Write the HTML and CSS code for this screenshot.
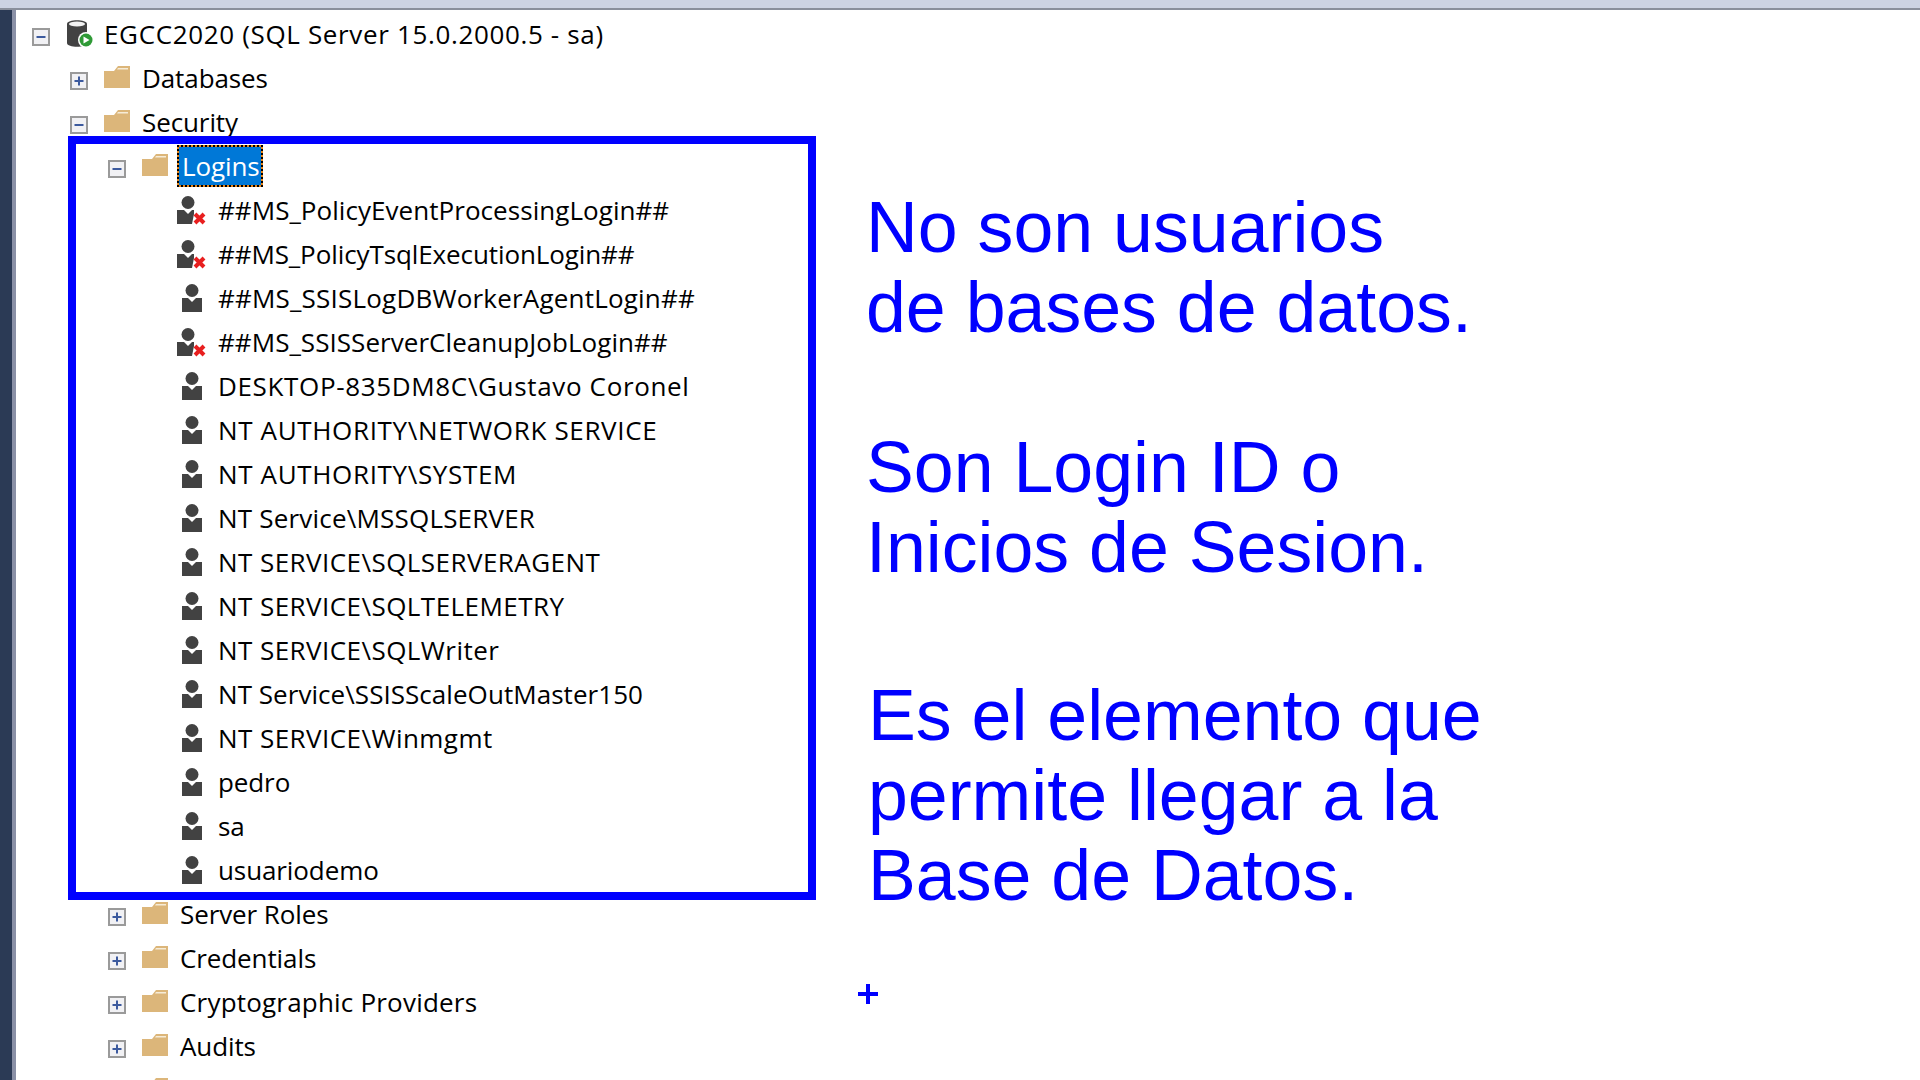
FILE: index.html
```html
<!DOCTYPE html>
<html lang="en">

<head>
    <meta charset="UTF-8">
    <title>EGCC2020 - Logins</title>
    <link rel="stylesheet" href="styles.css">
</head>

<body>
    <svg class="defs" width="0" height="0">
        <symbol id="plus" viewBox="0 0 18 18">
            <rect x="1" y="1" width="16" height="16" fill="#f1f1f4" stroke="#9a9a9a" stroke-width="2"/>
            <path d="M4.5 9h9M9 4.5v9" stroke="#3c5a9e" stroke-width="2"/>
        </symbol>
        <symbol id="minus" viewBox="0 0 18 18">
            <rect x="1" y="1" width="16" height="16" fill="#f1f1f4" stroke="#9a9a9a" stroke-width="2"/>
            <path d="M4.5 9h9" stroke="#3c5a9e" stroke-width="2"/>
        </symbol>
        <symbol id="folder" viewBox="0 0 26 24">
            <path d="M0 6 10 6 14 1H26V23H0Z" fill="#dcb67a"/>
            <path d="M14 3H24V4.5H13Z" fill="#f6ecd8"/>
        </symbol>
        <symbol id="server" viewBox="0 0 28 30">
            <path d="M1 5C1 0 21 0 21 5V24C21 29 1 29 1 24Z" fill="#424242"/>
            <ellipse cx="11" cy="5" rx="8" ry="2.4" fill="#f2f2f2"/>
            <circle cx="20" cy="21" r="8" fill="#fff"/>
            <circle cx="20" cy="21" r="6.5" fill="#2f9a36"/>
            <path d="M17.5 17.5 23.5 21 17.5 24.5Z" fill="#fff"/>
        </symbol>
        <symbol id="person" viewBox="0 0 28 28">
            <circle cx="14" cy="6.5" r="6.5" fill="#424242"/>
            <path d="M4 14H10L14 18 18 14H24V28H4Z" fill="#424242"/>
        </symbol>
        <symbol id="person-off" viewBox="0 0 30 32">
            <circle cx="11" cy="6.5" r="6.5" fill="#424242"/>
            <path d="M0 14H7L11 18 15 14H17V18L15 28H0Z" fill="#424242"/>
            <path d="M18 18 27 27M27 18 18 27" stroke="#e81f1f" stroke-width="4"/>
        </symbol>
    </svg>

    <div class="topbar"></div>

    <div class="window">
        <div class="sidebar"></div>
        <ul class="tree">
            <li class="row lvl0">
                <svg class="exp"><use href="#minus"/></svg>
                <svg class="ico-server"><use href="#server"/></svg>
                <span class="txt wide">EGCC2020 (SQL Server 15.0.2000.5 - sa)</span>
            </li>
            <li class="row lvl1">
                <svg class="exp"><use href="#plus"/></svg>
                <svg class="ico-folder"><use href="#folder"/></svg>
                <span class="txt">Databases</span>
            </li>
            <li class="row lvl1">
                <svg class="exp"><use href="#minus"/></svg>
                <svg class="ico-folder"><use href="#folder"/></svg>
                <span class="txt">Security</span>
            </li>
            <li class="row lvl2">
                <svg class="exp"><use href="#minus"/></svg>
                <svg class="ico-folder"><use href="#folder"/></svg>
                <span class="txt selected">Logins</span>
            </li>
            <li class="row lvl3"><svg class="ico-off"><use href="#person-off"/></svg><span class="txt hash">##MS_PolicyEventProcessingLogin##</span></li>
            <li class="row lvl3"><svg class="ico-off"><use href="#person-off"/></svg><span class="txt">##MS_PolicyTsqlExecutionLogin##</span></li>
            <li class="row lvl3"><svg class="ico-person"><use href="#person"/></svg><span class="txt mid">##MS_SSISLogDBWorkerAgentLogin##</span></li>
            <li class="row lvl3"><svg class="ico-off"><use href="#person-off"/></svg><span class="txt hash">##MS_SSISServerCleanupJobLogin##</span></li>
            <li class="row lvl3"><svg class="ico-person"><use href="#person"/></svg><span class="txt wide">DESKTOP-835DM8C\Gustavo Coronel</span></li>
            <li class="row lvl3"><svg class="ico-person"><use href="#person"/></svg><span class="txt wide">NT AUTHORITY\NETWORK SERVICE</span></li>
            <li class="row lvl3"><svg class="ico-person"><use href="#person"/></svg><span class="txt wide">NT AUTHORITY\SYSTEM</span></li>
            <li class="row lvl3"><svg class="ico-person"><use href="#person"/></svg><span class="txt mid">NT Service\MSSQLSERVER</span></li>
            <li class="row lvl3"><svg class="ico-person"><use href="#person"/></svg><span class="txt caps">NT SERVICE\SQLSERVERAGENT</span></li>
            <li class="row lvl3"><svg class="ico-person"><use href="#person"/></svg><span class="txt caps">NT SERVICE\SQLTELEMETRY</span></li>
            <li class="row lvl3"><svg class="ico-person"><use href="#person"/></svg><span class="txt caps">NT SERVICE\SQLWriter</span></li>
            <li class="row lvl3"><svg class="ico-person"><use href="#person"/></svg><span class="txt hash">NT Service\SSISScaleOutMaster150</span></li>
            <li class="row lvl3"><svg class="ico-person"><use href="#person"/></svg><span class="txt caps">NT SERVICE\Winmgmt</span></li>
            <li class="row lvl3"><svg class="ico-person"><use href="#person"/></svg><span class="txt">pedro</span></li>
            <li class="row lvl3"><svg class="ico-person"><use href="#person"/></svg><span class="txt">sa</span></li>
            <li class="row lvl3"><svg class="ico-person"><use href="#person"/></svg><span class="txt">usuariodemo</span></li>
            <li class="row lvl2">
                <svg class="exp"><use href="#plus"/></svg>
                <svg class="ico-folder"><use href="#folder"/></svg>
                <span class="txt">Server Roles</span>
            </li>
            <li class="row lvl2">
                <svg class="exp"><use href="#plus"/></svg>
                <svg class="ico-folder"><use href="#folder"/></svg>
                <span class="txt">Credentials</span>
            </li>
            <li class="row lvl2">
                <svg class="exp"><use href="#plus"/></svg>
                <svg class="ico-folder"><use href="#folder"/></svg>
                <span class="txt mid">Cryptographic Providers</span>
            </li>
            <li class="row lvl2">
                <svg class="exp"><use href="#plus"/></svg>
                <svg class="ico-folder"><use href="#folder"/></svg>
                <span class="txt">Audits</span>
            </li>
            <li class="row lvl2">
                <svg class="exp"><use href="#plus"/></svg>
                <svg class="ico-folder"><use href="#folder"/></svg>
            </li>
        </ul>
    </div>

    <!-- annotations drawn over the screenshot -->
    <div class="mark-box"></div>
    <p class="note note-a">No son usuarios<br>de bases de datos.</p>
    <p class="note note-b">Son Login ID o<br>Inicios de Sesion.</p>
    <p class="note note-c">Es el elemento que<br>permite llegar a la<br>Base de Datos.</p>
    <div class="cursor"></div>
</body>

</html>
```

FILE: styles.css
```css
:root {
    --col-mark: #0000ff;
    --row-h: 44px;
}

html, body {
    height: 100%;
}

body {
    margin: 0;
    overflow: hidden;
    background: #fff;
    color: #000;
    font-family: "Open Sans", "Noto Sans", sans-serif;
}

.defs {
    position: absolute;
}

.topbar {
    height: 8px;
    background: #cdd3e3;
    border-bottom: 2px solid #8a8f9c;
}

.window {
    display: flex;
    height: 1070px;
    overflow: hidden;
}

.sidebar {
    width: 12px;
    flex: none;
    background: #2b3a55;
    border-right: 4px solid #8a90a6;
}

.tree {
    list-style: none;
    margin: 2px 0 0;
    padding: 0;
    flex: 1;
}

.row {
    display: flex;
    align-items: center;
    height: var(--row-h);
}

.lvl0 { padding-left: 16px; }
.lvl1 { padding-left: 54px; }
.lvl2 { padding-left: 92px; }
.lvl3 { padding-left: 161px; }

.exp {
    width: 18px;
    height: 18px;
    margin-top: 6px;
    margin-right: 16px;
    flex: none;
}

.ico-folder {
    width: 26px;
    height: 24px;
    margin-top: -2px;
    margin-right: 12px;
    flex: none;
}

.ico-server {
    width: 28px;
    height: 30px;
    margin-right: 10px;
    flex: none;
}

.ico-person {
    width: 28px;
    height: 28px;
    margin-left: 1px;
    margin-right: 12px;
    flex: none;
}

.ico-off {
    width: 30px;
    height: 32px;
    margin-right: 11px;
    margin-top: 4px;
    flex: none;
}

.txt {
    font-size: 26px;
    line-height: 32px;
    letter-spacing: -0.1px;
    white-space: nowrap;
}

.hash {
    letter-spacing: 0.05px;
}

.mid {
    letter-spacing: 0.2px;
}

.caps {
    letter-spacing: 0.45px;
}

.wide {
    letter-spacing: 0.65px;
}

.selected {
    box-sizing: border-box;
    width: 86px;
    height: 42px;
    margin-left: -3px;
    padding-left: 3px;
    line-height: 38px;
    background: #0078d7;
    color: #fff;
    border: 2px solid #e8861a;
    outline: 2px dotted #000;
    outline-offset: -2px;
}

.mark-box {
    position: absolute;
    left: 68px;
    top: 136px;
    width: 748px;
    height: 764px;
    box-sizing: border-box;
    border: 8px solid var(--col-mark);
}

.note {
    position: absolute;
    margin: 0;
    font-family: "Liberation Sans", Arial, sans-serif;
    font-size: 71.7px;
    line-height: 80px;
    color: var(--col-mark);
    white-space: nowrap;
}

.note-a { left: 866px; top: 187px; }
.note-b { left: 866px; top: 427px; }
.note-c { left: 868px; top: 675px; }

.cursor {
    position: absolute;
    left: 858px;
    top: 984px;
    width: 20px;
    height: 20px;
    background:
        linear-gradient(var(--col-mark), var(--col-mark)) center / 100% 4px no-repeat,
        linear-gradient(var(--col-mark), var(--col-mark)) center / 4px 100% no-repeat;
}
```
